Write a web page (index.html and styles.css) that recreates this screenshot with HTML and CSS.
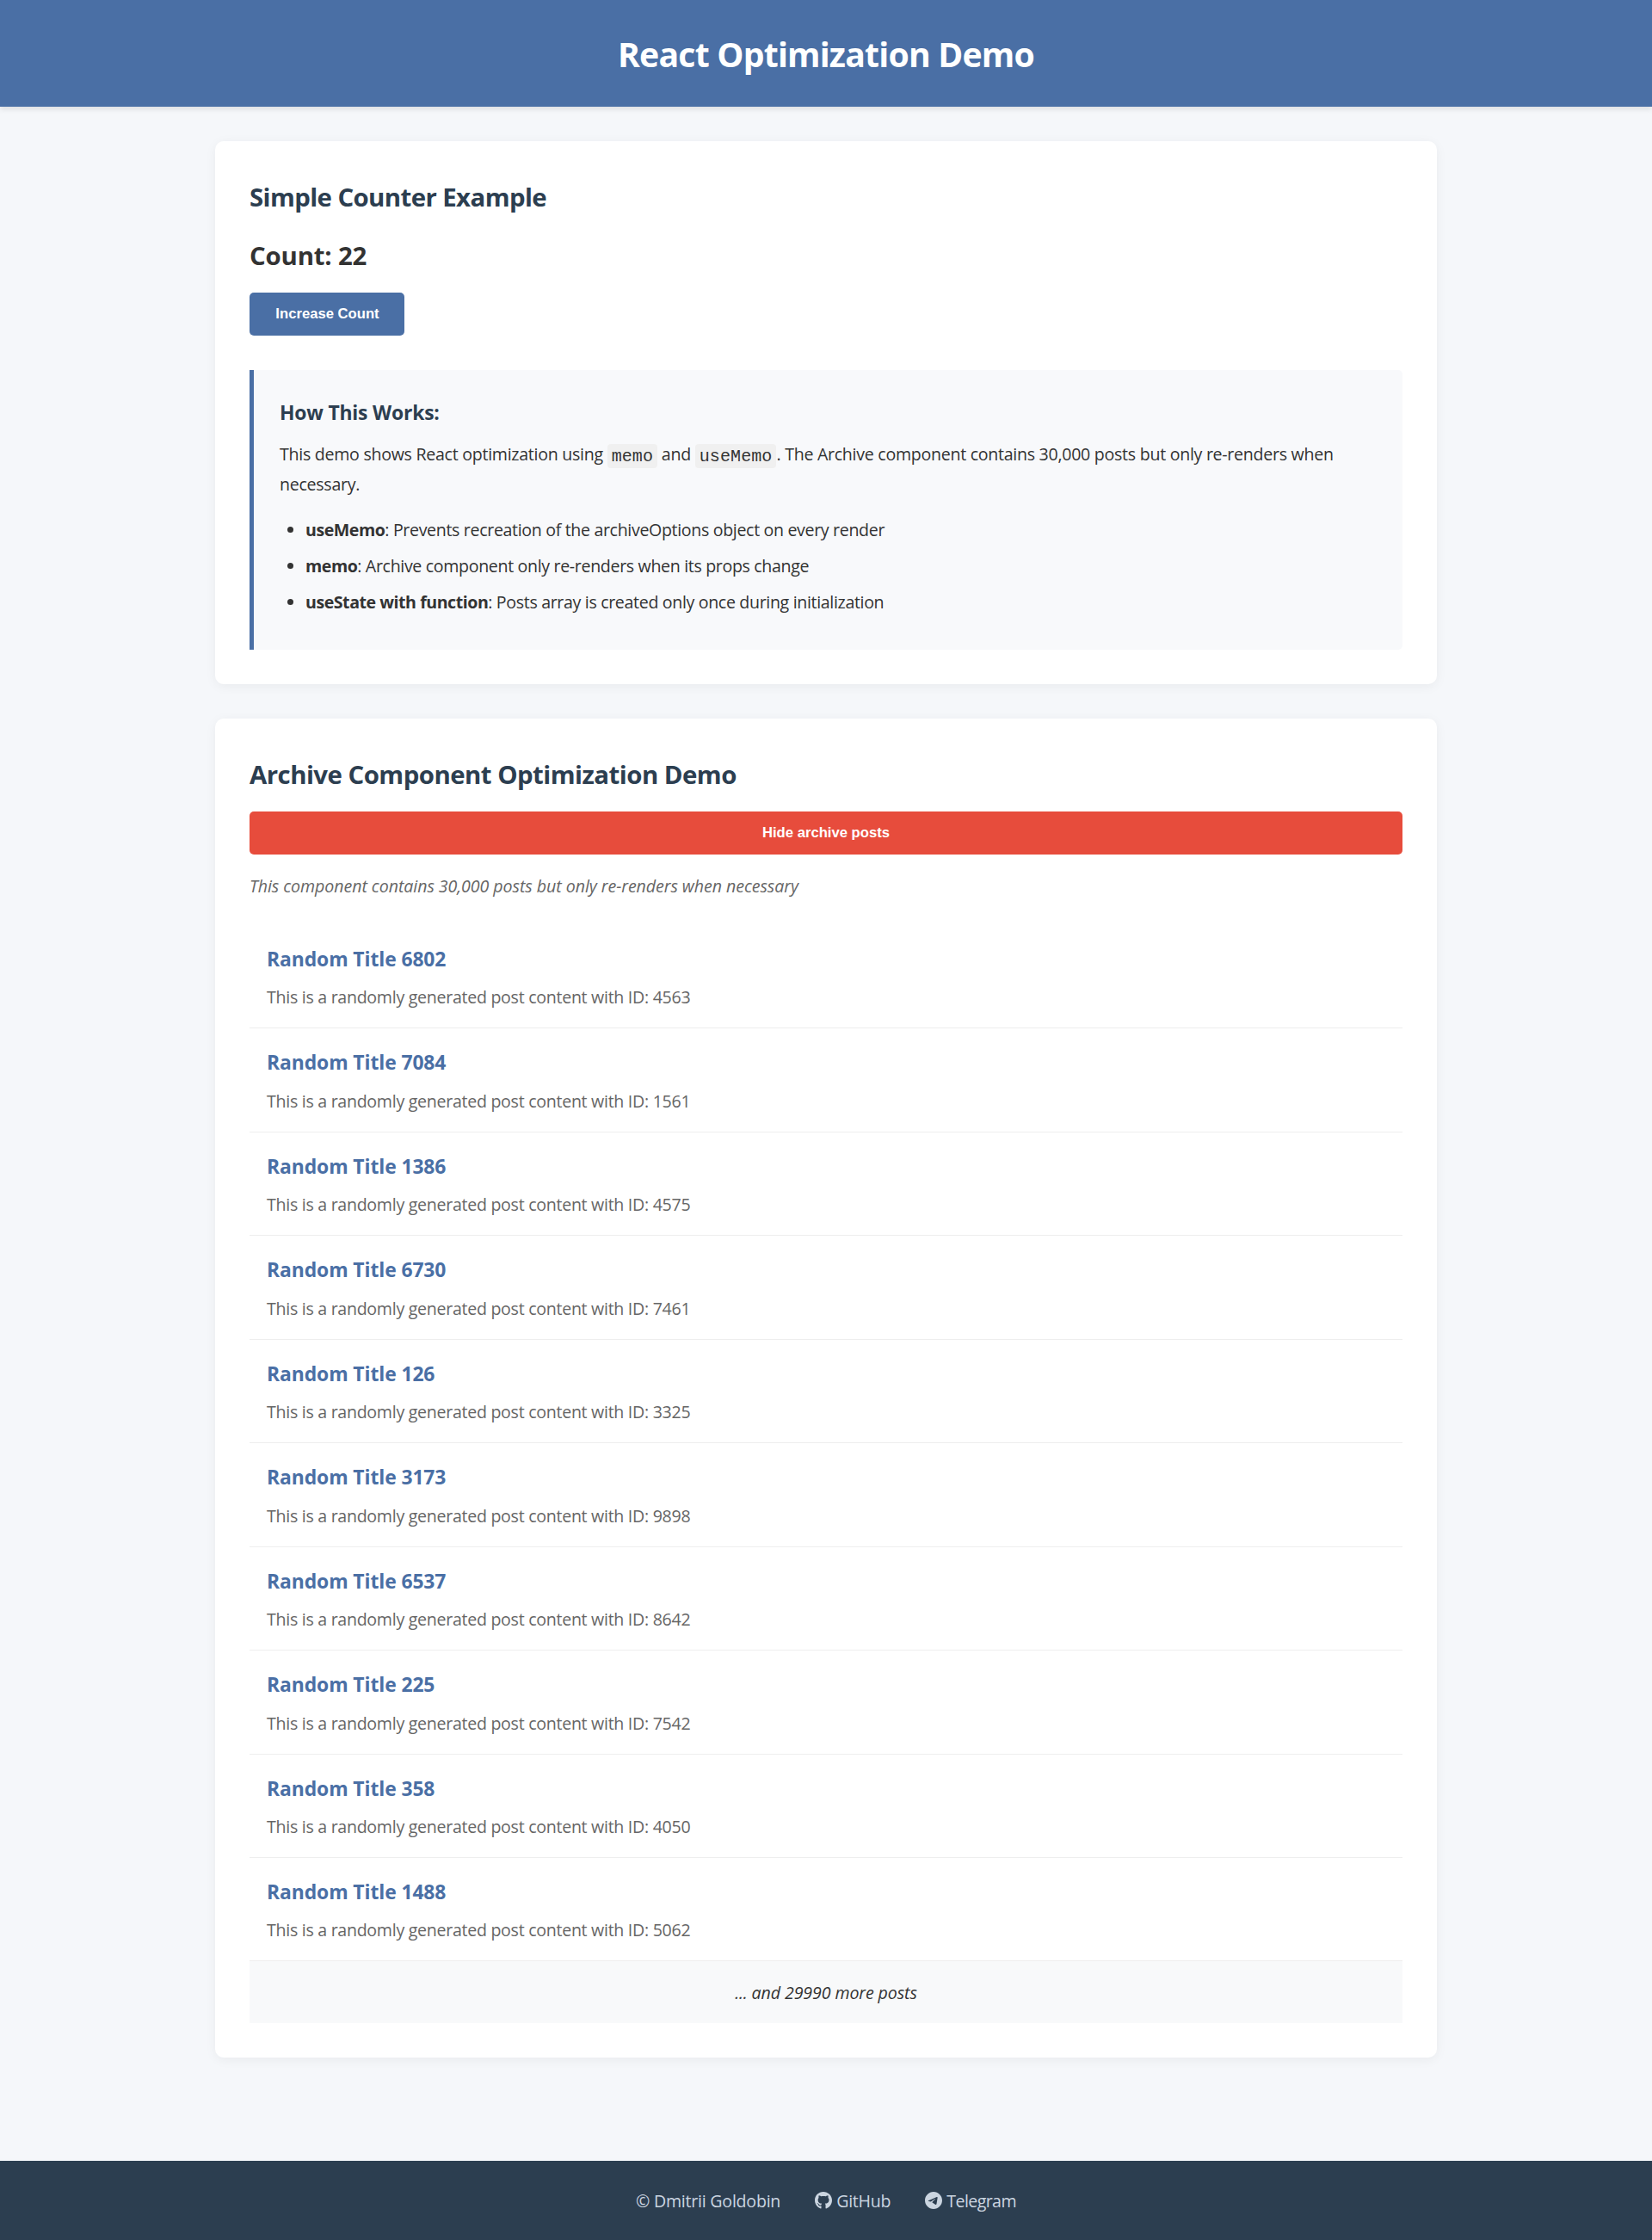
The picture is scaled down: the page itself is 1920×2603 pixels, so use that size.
FILE: index.html
```html
<!DOCTYPE html>
<html lang="en">
<head>
<meta charset="utf-8">
<title>React Optimization Demo</title>
<link rel="stylesheet" href="styles.css">
</head>
<body>
<header class="header"><h1>React Optimization Demo</h1></header>
<main class="main">
  <section class="card">
    <h2 class="tight">Simple Counter Example</h2>
    <div class="count">Count: 22</div>
    <button class="btn btn-primary">Increase Count</button>
    <div class="info">
      <h3>How This Works:</h3>
      <p>This demo shows React optimization using <code>memo</code> and <code>useMemo</code>. The Archive component contains 30,000 posts but only re-renders when necessary.</p>
      <ul>
        <li><strong>useMemo</strong>: Prevents recreation of the archiveOptions object on every render</li>
        <li><strong>memo</strong>: Archive component only re-renders when its props change</li>
        <li><strong>useState with function</strong>: Posts array is created only once during initialization</li>
      </ul>
    </div>
  </section>
  <section class="card">
    <h2>Archive Component Optimization Demo</h2>
    <button class="btn btn-danger">Hide archive posts</button>
    <p class="note">This component contains 30,000 posts but only re-renders when necessary</p>
    <ul class="posts">
      <li class="post"><h3>Random Title 6802</h3><p>This is a randomly generated post content with ID: 4563</p></li>
      <li class="post"><h3>Random Title 7084</h3><p>This is a randomly generated post content with ID: 1561</p></li>
      <li class="post"><h3>Random Title 1386</h3><p>This is a randomly generated post content with ID: 4575</p></li>
      <li class="post"><h3>Random Title 6730</h3><p>This is a randomly generated post content with ID: 7461</p></li>
      <li class="post"><h3>Random Title 126</h3><p>This is a randomly generated post content with ID: 3325</p></li>
      <li class="post"><h3>Random Title 3173</h3><p>This is a randomly generated post content with ID: 9898</p></li>
      <li class="post"><h3>Random Title 6537</h3><p>This is a randomly generated post content with ID: 8642</p></li>
      <li class="post"><h3>Random Title 225</h3><p>This is a randomly generated post content with ID: 7542</p></li>
      <li class="post"><h3>Random Title 358</h3><p>This is a randomly generated post content with ID: 4050</p></li>
      <li class="post"><h3>Random Title 1488</h3><p>This is a randomly generated post content with ID: 5062</p></li>
      <li class="more">... and 29990 more posts</li>
    </ul>
  </section>
</main>
<footer class="footer">
  <span class="copy">© Dmitrii Goldobin</span>
  <a class="link"><svg class="icon" viewBox="0 0 496 496"><path transform="translate(0 -8)" d="M165.9 397.4c0 2-2.3 3.600-5.200 3.600-3.300.3-5.600-1.300-5.600-3.600 0-2 2.300-3.600 5.200-3.600 3-.3 5.600 1.300 5.600 3.600zm-31.100-4.500c-.7 2 1.300 4.300 4.300 4.900 2.600 1 5.600 0 6.200-2s-1.300-4.300-4.300-5.200c-2.600-.7-5.500.3-6.200 2.300zm44.200-1.700c-2.900.7-4.900 2.600-4.600 4.900.3 2 2.900 3.300 5.900 2.600 2.900-.7 4.900-2.600 4.600-4.600-.3-1.900-3-3.200-5.900-2.900zM244.800 8C106.100 8 0 113.300 0 252c0 110.900 69.800 205.800 169.500 239.200 12.800 2.300 17.300-5.600 17.300-12.100 0-6.200-.3-40.400-.3-61.400 0 0-70 15-84.700-29.800 0 0-11.400-29.100-27.800-36.600 0 0-22.900-15.700 1.600-15.400 0 0 24.900 2 38.600 25.800 21.900 38.600 58.600 27.500 72.900 20.900 2.300-16 8.800-27.100 16-33.700-55.900-6.200-112.300-14.300-112.300-110.500 0-27.500 7.600-41.300 23.600-58.900-2.600-6.500-11.100-33.300 2.600-67.900 20.900-6.500 69 27 69 27 20-5.600 41.500-8.500 62.800-8.500s42.800 2.900 62.800 8.500c0 0 48.100-33.600 69-27 13.700 34.700 5.200 61.400 2.600 67.900 16 17.700 25.800 31.500 25.800 58.900 0 96.500-58.900 104.200-114.800 110.500 9.200 7.900 17 22.900 17 46.400 0 33.700-.3 75.400-.3 83.600 0 6.500 4.600 14.400 17.300 12.100C428.200 457.800 496 362.900 496 252 496 113.300 383.500 8 244.800 8z"/></svg><span>GitHub</span></a>
  <a class="link telegram"><svg class="icon" viewBox="0 0 496 496"><path transform="translate(0 -8)" d="M248 8C111.033 8 0 119.033 0 256s111.033 248 248 248 248-111.033 248-248S384.967 8 248 8zm114.952 168.660c-3.732 39.215-19.881 134.378-28.100 178.300-3.476 18.584-10.322 24.816-16.948 25.425-14.400 1.326-25.338-9.517-39.287-18.661-21.827-14.308-34.158-23.215-55.346-37.177-24.485-16.135-8.612-25 5.342-39.500 3.652-3.793 67.107-61.510 68.335-66.746.153-.655.3-3.100-1.154-4.384s-3.590-.849-5.135-.5q-3.283.746-104.608 69.142-14.845 10.194-26.894 9.934c-8.855-.191-25.888-5.006-38.551-9.123-15.531-5.048-27.875-7.717-26.800-16.291q.840-6.700 18.450-13.700 108.446-47.248 144.628-62.300c68.872-28.647 83.183-33.623 92.511-33.789 2.052-.034 6.639.474 9.610 2.885a10.452 10.452 0 0 1 3.530 6.716 43.765 43.765 0 0 1 .417 9.769z"/></svg><span>Telegram</span></a>
</footer>
</body>
</html>
```
FILE: styles.css
```css
* { box-sizing: border-box; margin: 0; padding: 0; }

body {
  min-height: 2603px;
  display: flex;
  flex-direction: column;
  background: #f5f7fa;
  color: #333;
  font-family: "Segoe UI", "Open Sans", sans-serif;
  font-size: 19.6px;
  line-height: 32px;
  letter-spacing: -0.29px;
}

.header {
  padding: 31px 30px 29px;
  background: #4a6fa5;
  color: #fff;
  text-align: center;
  box-shadow: 0 2.5px 6px rgba(0, 0, 0, 0.1);
}
.header h1 { font-size: 39.2px; line-height: 64px; letter-spacing: -0.8px; }

.main {
  width: 1420px;
  margin: 40px auto 120px;
  display: flex;
  flex-direction: column;
  gap: 40px;
}

.card {
  padding: 41px 40px 40px;
  background: #fff;
  border-radius: 10px;
  box-shadow: 0 2.5px 12.5px rgba(0, 0, 0, 0.05);
}
.card h2 {
  margin-bottom: 19px;
  color: #2c3e50;
  font-size: 29.4px;
  line-height: 48px;
  letter-spacing: -0.53px;
}
.card h2.tight { margin-bottom: 20px; letter-spacing: -0.6px; }
.count {
  margin-bottom: 19px;
  font-size: 29.4px;
  font-weight: 700;
  line-height: 48px;
  letter-spacing: -0.2px;
}

.btn {
  display: block;
  height: 50px;
  padding: 0 30px 1px;
  border: 0;
  border-radius: 5px;
  color: #fff;
  font: 700 16.667px "Liberation Sans", Arial, sans-serif;
}
.btn-primary { width: 180px; padding-right: 29px; background: #4a6fa5; }
.btn-danger { width: 100%; background: #e74c3c; }

.info {
  margin-top: 40px;
  padding: 31px 30px 29px;
  border-left: 5px solid #4a6fa5;
  border-radius: 0 5px 5px 0;
  background: #f8f9fb;
}
.info h3 {
  margin-bottom: 13px;
  color: #2c3e50;
  font-size: 22.9px;
  line-height: 37px;
  letter-spacing: -0.2px;
}
.info p { margin-bottom: 20px; line-height: 34.5px; letter-spacing: -0.28px; }
.info ul { padding-left: 30px; }
.info li { margin-bottom: 10px; letter-spacing: -0.34px; }
.info strong { letter-spacing: -0.47px; }

code {
  padding: 2.5px 5px;
  border-radius: 4px;
  background: #f0f0f0;
  font: 20px/20px "Courier New", "Liberation Mono", monospace;
  letter-spacing: 0.1px;
}

.note {
  margin: 21px 0 29px;
  color: #666;
  font-style: italic;
  letter-spacing: -0.06px;
}

.posts { list-style: none; }
.post { padding: 21px 20px 19px; border-bottom: 1px solid #eee; }
.post h3 {
  margin-bottom: 10px;
  color: #4a6fa5;
  font-size: 22.9px;
  line-height: 37.44px;
  letter-spacing: -0.1px;
}
.post p { color: #666; }
.more {
  padding: 21px 20px 19px;
  background: #f8f9fa;
  font-style: italic;
  text-align: center;
  letter-spacing: -0.1px;
}

.footer {
  flex: 1;
  display: flex;
  justify-content: center;
  gap: 40px;
  padding-top: 31px;
  background: #2c3e50;
  color: #cbd5e0;
  letter-spacing: -0.24px;
}
.link { display: flex; gap: 5px; }
.telegram { letter-spacing: -0.6px; }
.icon { width: 20px; height: 20px; margin-top: 5px; fill: currentColor; }
```
